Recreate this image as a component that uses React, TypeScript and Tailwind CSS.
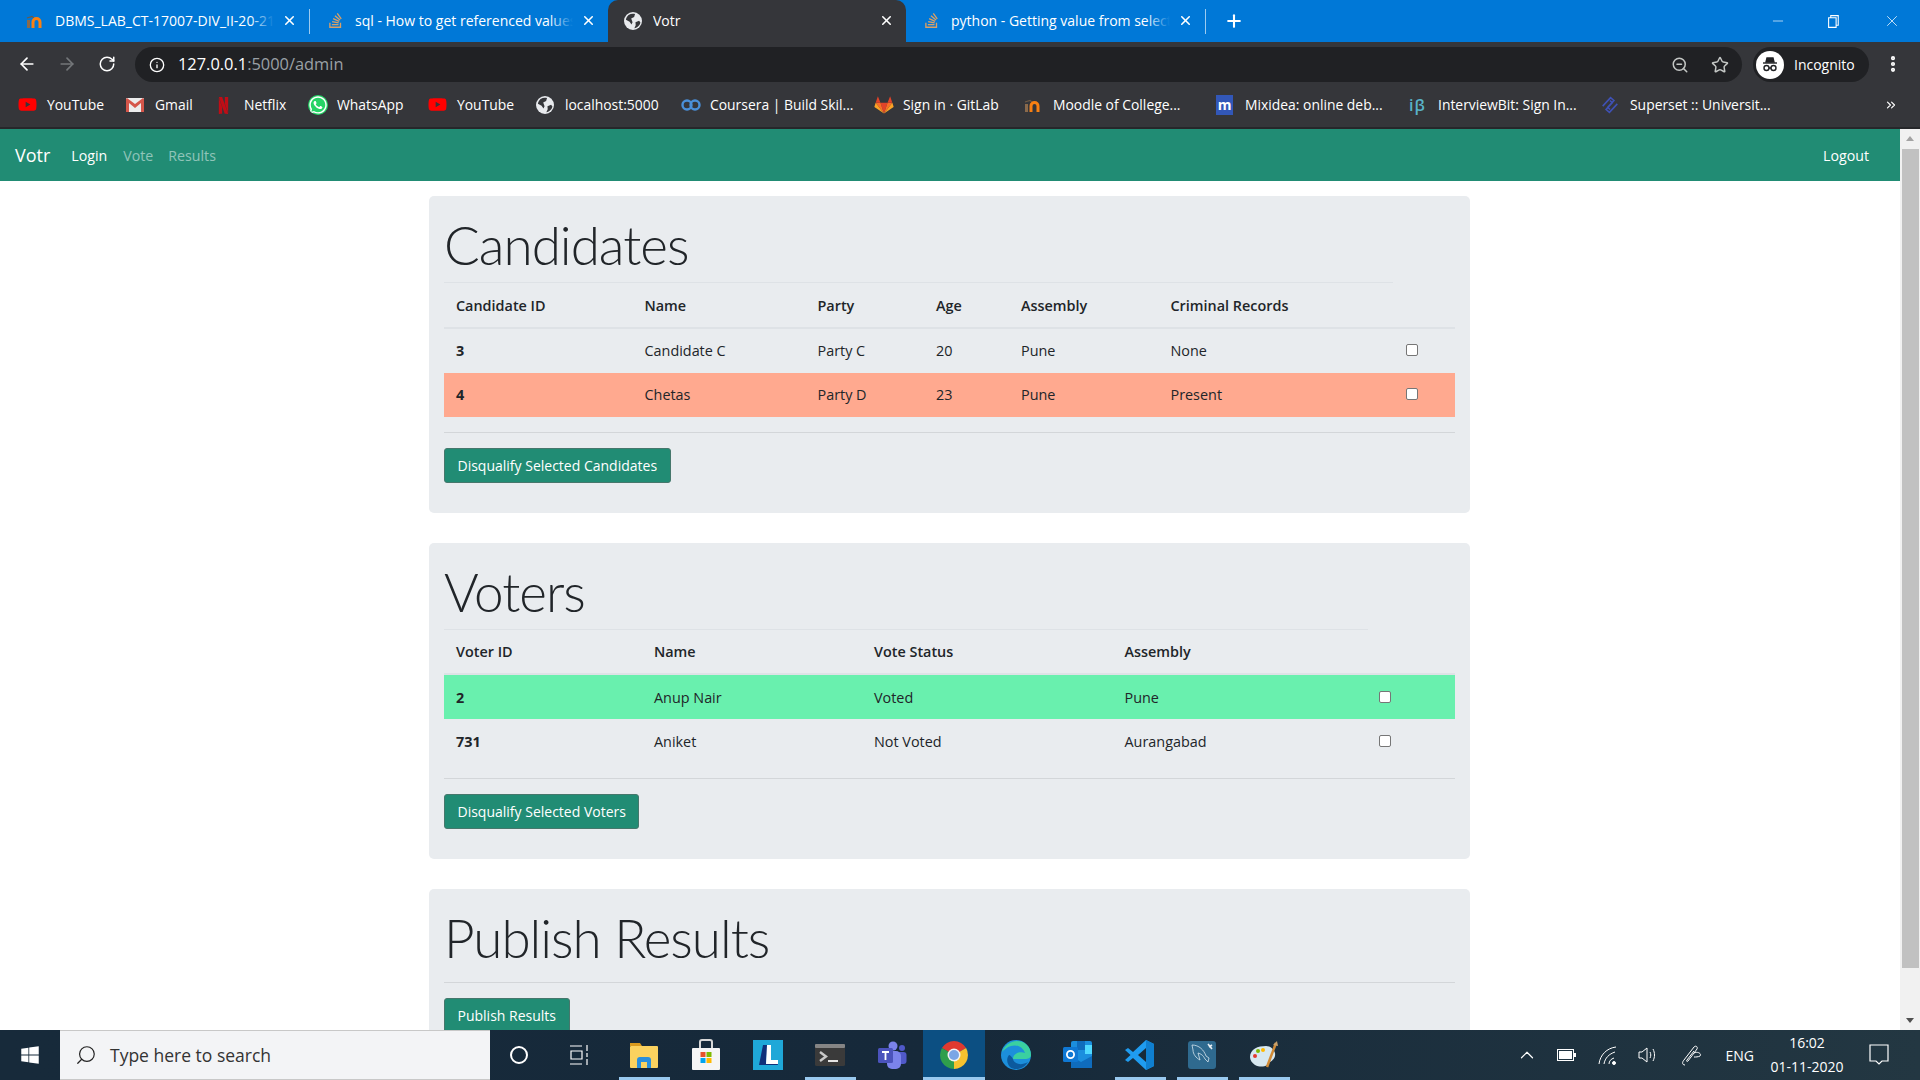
import { ChevronUp, Star, Search, ZoomOut, Plus, X, Minus, Info, ArrowLeft, ArrowRight, RotateCw, EllipsisVertical, ChevronsRight } from "lucide-react";
import { FaYoutube, FaWhatsapp, FaStackOverflow, FaWindows } from "react-icons/fa";
import { SiNetflix } from "react-icons/si";
import type { ReactNode } from "react";

const font = "font-['Open_Sans','Liberation_Sans',sans-serif]";

function MoodleIcon({ className = "" }: { className?: string }) {
  return (
    <svg viewBox="0 0 18 16" className={className} fill="none">
      <rect x="1" y="7" width="3" height="8" fill="#8a6a4c" />
      <path d="M1 5l5-1.5L8 5" stroke="#6f5a46" strokeWidth="1.2" />
      <path d="M7 15V9a3.5 3.5 0 017 0v6" stroke="#f98012" strokeWidth="3" />
    </svg>
  );
}

function GlobeIcon({ className = "" }: { className?: string }) {
  return (
    <svg viewBox="0 0 16 16" className={className}>
      <circle cx="8" cy="8" r="8" fill="#e8eaed" />
      <path d="M4 2.6C6 1.4 8 1.3 9.8 1.8L9 4.5 6.4 5.8 7.6 9 6.6 11 5 8.6 1.7 6.8C2 5 3 3.6 4 2.6z" fill="#35363a" />
      <path d="M10.2 9.2l3.2-1.4 1.2 1.6c-.4 2-1.8 3.8-3.8 4.6l-1.6.4 1.2-2.6z" fill="#35363a" />
    </svg>
  );
}

function Tab({ title, icon, active, width }: { title: string; icon: ReactNode; active?: boolean; width: string }) {
  return (
    <div className={`flex h-[42px] shrink-0 items-center pb-[1px] ${width} ${active ? "rounded-t-[10px] bg-[#35363a]" : ""}`}>
      <span className="flex w-[45px] shrink-0 justify-center pl-[5px]">{icon}</span>
      <span className="relative mr-[8px] min-w-0 flex-1 overflow-hidden text-[14px] whitespace-nowrap text-white">
        {title}
        {!active && <span className="absolute top-0 right-0 h-full w-6 bg-gradient-to-r from-transparent to-[#0078d7]" />}
      </span>
      <X className="mr-[12px] size-[15px] shrink-0 text-white" strokeWidth={2.5} />
    </div>
  );
}

function TabDivider() {
  return <span className="h-[25px] w-px shrink-0 bg-[#9ccbf0]" />;
}

const bookmarks = [
  { label: "YouTube", width: "w-[108px]", icon: <FaYoutube className="size-[19px] text-[#ff0000]" /> },
  { label: "Gmail", width: "w-[89px]", icon: (
    <svg viewBox="0 0 18 14" className="h-[14px] w-[18px]">
      <rect width="18" height="14" rx="1" fill="#ececec" />
      <path d="M0 1v13h3V5l6 5 6-5v9h3V1l-1-1-8 6-8-6z" fill="#d5564a" />
    </svg>
  ) },
  { label: "Netflix", width: "w-[93px]", icon: <SiNetflix className="h-[21px] w-[17px] text-[#c00d16]" /> },
  { label: "WhatsApp", width: "w-[120px]", icon: <FaWhatsapp className="size-[20px] rounded-full bg-[#25d366] text-white" /> },
  { label: "YouTube", width: "w-[108px]", icon: <FaYoutube className="size-[19px] text-[#ff0000]" /> },
  { label: "localhost:5000", width: "w-[145px]", icon: <GlobeIcon className="size-[18px]" /> },
  { label: "Coursera | Build Skil...", width: "w-[193px]", icon: (
    <svg viewBox="0 0 20 12" className="h-[12px] w-[20px]" fill="none" stroke="#4a90d9" strokeWidth="2.4">
      <circle cx="6" cy="6" r="4.5" />
      <circle cx="14" cy="6" r="4.5" />
    </svg>
  ) },
  { label: "Sign in · GitLab", width: "w-[150px]", icon: (
    <svg viewBox="0 0 18 17" className="h-[19px] w-[20px]">
      <path d="M9 16.5L12.2 7H5.8z" fill="#e24329" />
      <path d="M9 16.5L5.8 7H1.5z" fill="#fc6d26" />
      <path d="M9 16.5L12.2 7h4.3z" fill="#fc6d26" />
      <path d="M1.5 7L.4 10.2c-.1.3 0 .6.3.8L9 16.5z" fill="#fca326" />
      <path d="M16.5 7l1.1 3.2c.1.3 0 .6-.3.8L9 16.5z" fill="#fca326" />
      <path d="M1.5 7l2-6 2.3 6zM16.5 7l-2-6-2.3 6z" fill="#e24329" />
    </svg>
  ) },
  { label: "Moodle of College...", width: "w-[192px]", icon: <MoodleIcon className="h-[16px] w-[18px]" /> },
  { label: "Mixidea: online deb...", width: "w-[193px]", icon: (
    <span className="flex h-[20px] w-[17px] items-center justify-center bg-[#3257b8] text-[14px] leading-none font-bold text-white">m</span>
  ) },
  { label: "InterviewBit: Sign In...", width: "w-[192px]", icon: <span className="text-[16px] leading-none font-semibold tracking-[1px] text-[#59b3c9]">iβ</span> },
  { label: "Superset :: Universit...", width: "w-[260px]", icon: (
    <svg viewBox="0 0 16 16" className="size-[18px]" fill="none" stroke="#3f51b5" strokeWidth="1.4">
      <path d="M1.5 9L8.5 1.5l3 2.5-5.5 6 2 2M14.5 7l-7 7.5-3-2.5 5.5-6-2-2" />
    </svg>
  ) },
];

function ChromeBar() {
  return (
    <header className="shrink-0">
      <div className="flex h-[42px] items-center bg-[#0078d7]">
        <span className="w-[10px] shrink-0" />
        <Tab width="w-[299px]" title="DBMS_LAB_CT-17007-DIV_II-20-21" icon={<MoodleIcon className="h-[16px] w-[18px]" />} />
        <TabDivider />
        <Tab width="w-[298px]" title="sql - How to get referenced values" icon={<FaStackOverflow className="size-[17px] text-[#d9a066]" />} />
        <Tab width="w-[298px]" active title="Votr" icon={<GlobeIcon className="size-[18px]" />} />
        <Tab width="w-[299px]" title="python - Getting value from select" icon={<FaStackOverflow className="size-[17px] text-[#d9a066]" />} />
        <TabDivider />
        <Plus className="ml-[18px] size-[20px] text-white" strokeWidth={2.5} />
        <div className="ml-auto flex items-center">
          <Minus className="mr-[41px] size-[16px] text-white" strokeWidth={1} />
          <svg viewBox="0 0 14 14" className="mr-[41px] size-[15px]" fill="none" stroke="white">
            <path d="M3.5 3.5V1.5h7v9h-2M1.5 3.5h7v9h-7z" />
          </svg>
          <X className="mr-[19px] size-[18px] text-white" strokeWidth={1} />
        </div>
      </div>
      <div className="flex h-[40px] items-center bg-[#35363a] pt-[3px]">
        <ArrowLeft className="ml-[17px] size-[20px] text-white" />
        <ArrowRight className="ml-[20px] size-[20px] text-[#74777a]" />
        <RotateCw className="ml-[21px] size-[18px] text-white" />
        <div className="ml-[19px] flex h-[35px] w-[1607px] items-center self-end rounded-full bg-[#202124]">
          <Info className="ml-[14px] size-[16px] text-white" />
          <span className="ml-[13px] text-[16.4px] text-white">
            127.0.0.1<span className="text-[#9aa0a6]">:5000/admin</span>
          </span>
          <ZoomOut className="ml-auto size-[18px] text-[#c4c7c5]" />
          <Star className="mr-[13px] ml-[22px] size-[18px] text-[#c4c7c5]" />
        </div>
        <div className="ml-[11px] flex h-[35px] w-[116px] items-center self-end rounded-full bg-[#202124]">
          <span className="ml-[3px] flex size-[28px] items-center justify-center rounded-full bg-white">
            <svg viewBox="0 0 20 20" className="size-[20px]" fill="none" stroke="#202124" strokeWidth="1.4">
              <path d="M6 7l1-4h6l1 4z" fill="#202124" />
              <path d="M3 8h14" />
              <circle cx="6.5" cy="13" r="2.5" />
              <circle cx="13.5" cy="13" r="2.5" />
              <path d="M9 13h2" />
            </svg>
          </span>
          <span className="ml-[10px] text-[14px] text-white">Incognito</span>
        </div>
        <EllipsisVertical className="ml-[14px] size-[20px] text-white" strokeWidth={3} />
      </div>
      <div className="flex h-[47px] items-center border-b-2 border-[#26272a] bg-[#35363a] pt-[1px] pl-[18px] text-[13.9px] text-white">
        {bookmarks.map((b, i) => (
          <div key={i} className={`flex shrink-0 items-center ${b.width}`}>
            <span className="flex w-[29px] shrink-0 justify-start">{b.icon}</span>
            <span className="whitespace-nowrap">{b.label}</span>
          </div>
        ))}
        <ChevronsRight className="ml-[23px] size-[14px] text-white" />
      </div>
    </header>
  );
}

function Navbar() {
  return (
    <nav className="flex h-[52px] shrink-0 items-center bg-[#218c74] pt-[1px] pr-[31px] pl-[15px] text-[14.2px]">
      <span className="mr-[21px] text-[18px] text-white">Votr</span>
      <span className="mr-[16px] text-white">Login</span>
      <span className="mr-[15px] text-white/50">Vote</span>
      <span className="text-white/50">Results</span>
      <span className="ml-auto text-white">Logout</span>
    </nav>
  );
}

type Row = { cells: string[]; tone?: string };

function DataTable({ heads, cols, rows, boxMargin }: { heads: string[]; cols: string[]; rows: Row[]; boxMargin: string }) {
  return (
    <table className="w-full table-fixed border-collapse text-[14.4px] text-[#212529]">
      <colgroup>
        {cols.map((c) => (
          <col key={c} className={c} />
        ))}
        <col />
      </colgroup>
      <thead>
        <tr className="h-[45px] border-b-2 border-[#dee2e6] text-left">
          {heads.map((h) => (
            <th key={h} className="border-t border-[#dee2e6] px-3 pt-[2px] font-semibold">
              {h}
            </th>
          ))}
          <th />
        </tr>
      </thead>
      <tbody>
        {rows.map((r, idx) => (
          <tr key={r.cells[0]} className={`${idx === rows.length - 1 ? "h-[44px]" : "h-[45px]"} ${r.tone ?? ""}`}>
            {r.cells.map((c, i) => (
              <td key={c} className={`px-3 pt-[1px] ${i === 0 ? "font-bold" : ""}`}>
                {c}
              </td>
            ))}
            <td className="px-3 pb-[1px]">
              <span className={`block size-[12px] rounded-[2px] border border-[#767676] bg-white ${boxMargin}`} />
            </td>
          </tr>
        ))}
      </tbody>
    </table>
  );
}

function Card({ title, children }: { title: string; children: ReactNode }) {
  return (
    <section className="mb-[30px] rounded-[5px] bg-[#e9ecef] px-[15px] pb-[30px]">
      <h1 className="h-[86px] pt-[18px] font-['Lato','Open_Sans',sans-serif] text-[53px] leading-[62px] font-light tracking-[-1px] whitespace-nowrap text-[#212529]">{title}</h1>
      {children}
    </section>
  );
}

function GreenButton({ label }: { label: string }) {
  return (
    <button className="block h-[35px] rounded-[3px] border border-[#46776c] bg-[#218c74] px-[12.5px] text-[14px] text-white">{label}</button>
  );
}

function Page() {
  return (
    <div className="flex min-h-0 flex-1">
      <div className="flex min-w-0 flex-1 flex-col">
        <Navbar />
        <main className="min-h-0 flex-1 overflow-hidden bg-white pt-[15px] pr-[1px]">
          <div className="mx-auto w-[1041px]">
            <Card title="Candidates">
              <DataTable
                boxMargin="ml-[1px]"
                heads={["Candidate ID", "Name", "Party", "Age", "Assembly", "Criminal Records"]}
                cols={["w-[188.5px]", "w-[173px]", "w-[118.5px]", "w-[85px]", "w-[149.5px]", "w-[234.5px]"]}
                rows={[
                  { cells: ["3", "Candidate C", "Party C", "20", "Pune", "None"] },
                  { cells: ["4", "Chetas", "Party D", "23", "Pune", "Present"], tone: "bg-[#ffa98f]" },
                ]}
              />
              <hr className="mt-[15px] mb-[15px] border-[#d3d6d9]" />
              <GreenButton label="Disqualify Selected Candidates" />
            </Card>
            <Card title="Voters">
              <DataTable
                boxMargin="-ml-[1px]"
                heads={["Voter ID", "Name", "Vote Status", "Assembly"]}
                cols={["w-[198px]", "w-[220px]", "w-[250.5px]", "w-[255.5px]"]}
                rows={[
                  { cells: ["2", "Anup Nair", "Voted", "Pune"], tone: "bg-[#69f0ae]" },
                  { cells: ["731", "Aniket", "Not Voted", "Aurangabad"] },
                ]}
              />
              <hr className="mt-[15px] mb-[15px] border-[#d3d6d9]" />
              <GreenButton label="Disqualify Selected Voters" />
            </Card>
            <Card title="Publish Results">
              <hr className="mt-[7px] mb-[15px] border-[#d3d6d9]" />
              <GreenButton label="Publish Results" />
            </Card>
          </div>
        </main>
      </div>
      <div className="flex w-5 shrink-0 flex-col items-center bg-[#f1f1f1]">
        <span className="mt-[7px] size-0 border-x-[4px] border-b-[5px] border-x-transparent border-b-[#a3a3a3]" />
        <span className="mt-[8px] h-[819px] w-[17px] bg-[#c1c1c1]" />
        <span className="mt-auto mb-[7px] size-0 border-x-[4px] border-t-[5px] border-x-transparent border-t-[#505050]" />
      </div>
    </div>
  );
}

const apps = [
  { bar: "mx-[5.5px]", icon: (
    <svg viewBox="0 0 30 28" className="h-[28px] w-[30px]">
      <path d="M1 2h10l2 3h-12z" fill="#d99a1e" />
      <rect x="1" y="5" width="28" height="22" rx="1" fill="#fbd25f" />
      <path d="M8 27v-8a3 3 0 013-3h8a3 3 0 013 3v8h-4v-6h-6v6z" fill="#2a8fdc" />
    </svg>
  ) },
  { bar: "", icon: (
    <svg viewBox="0 0 30 32" className="h-[32px] w-[30px]">
      <path d="M9 9V3a2 2 0 012-2h8a2 2 0 012 2v6" fill="none" stroke="#d8d8d8" strokeWidth="2" />
      <rect x="1" y="9" width="28" height="22" rx="1" fill="#f5f5f5" />
      <rect x="9.5" y="13" width="5" height="5" fill="#e6522c" />
      <rect x="15.5" y="13" width="5" height="5" fill="#7fba00" />
      <rect x="9.5" y="19" width="5" height="5" fill="#00a4ef" />
      <rect x="15.5" y="19" width="5" height="5" fill="#ffb900" />
    </svg>
  ) },
  { bar: "", icon: (
    <svg viewBox="0 0 30 30" className="size-[30px]">
      <rect width="30" height="30" fill="#1fa8d8" />
      <path d="M10 5h5l-2 18h11v-1l1 3H6z" fill="#10307a" />
      <path d="M14 5h4v15h7v4H13z" fill="#fff" />
    </svg>
  ) },
  { bar: "mx-[5.5px]", icon: (
    <svg viewBox="0 0 30 22" className="h-[22px] w-[30px]">
      <rect width="30" height="22" rx="1.5" fill="#3a3a3a" />
      <rect width="30" height="4" rx="1" fill="#858585" />
      <path d="M5 8l6 4.5L5 17" fill="none" stroke="#c8c8c8" strokeWidth="2.4" />
      <path d="M13 17h10" stroke="#e4e4e4" strokeWidth="2" />
    </svg>
  ) },
  { bar: "", icon: (
    <svg viewBox="0 0 30 28" className="h-[28px] w-[30px]">
      <circle cx="16" cy="5" r="4.5" fill="#7b83eb" />
      <circle cx="25" cy="7" r="3" fill="#5059c9" />
      <rect x="20" y="11" width="9.5" height="12" rx="3" fill="#5059c9" />
      <rect x="10" y="10" width="14" height="18" rx="5" fill="#7b83eb" />
      <rect x="1" y="7" width="15" height="15" rx="1.5" fill="#4b53bc" />
      <path d="M5 11h7M8.5 11v8" stroke="#fff" strokeWidth="1.8" />
    </svg>
  ) },
  { bar: "", tone: "bg-[#0c4f82]", icon: (
    <svg viewBox="0 0 28 28" className="size-[28px]">
      <path d="M14 14L1.9 7A14 14 0 0126.1 7z" fill="#e0392f" />
      <path d="M14 14L26.1 7A14 14 0 0114 28z" fill="#f6c22f" />
      <path d="M14 14L14 28A14 14 0 011.9 7z" fill="#2f9e4c" />
      <circle cx="14" cy="14" r="6.5" fill="#f3f3f3" />
      <circle cx="14" cy="14" r="5" fill="#7aa5e6" />
    </svg>
  ) },
  { bar: "", icon: (
    <svg viewBox="0 0 30 30" className="size-[30px]">
      <circle cx="15" cy="15" r="15" fill="#1c8fdb" />
      <path d="M16 1c8 0 14 6 14 14 0 3-3 4-6 4H12c0-5 6-8 12-6-2-6-8-9-14-7C6 7 3 10 1 12 3 6 9 1 16 1z" fill="#3ad0a0" />
      <path d="M12 19c1 5 8 7 15 3-4 7-13 9-18 5-3-3-4-8-1-12 1 0 3 2 4 4z" fill="#0c5a9e" />
    </svg>
  ) },
  { bar: "", icon: (
    <svg viewBox="0 0 30 30" className="size-[30px]">
      <rect x="8" y="1" width="21" height="27" rx="2" fill="#1b8ede" />
      <rect x="14" y="1" width="8" height="9" fill="#0f6cbd" />
      <rect x="22" y="5" width="7" height="9" fill="#50d9ff" />
      <path d="M8 16l10 6 11-6v12H8z" fill="#0f6cbd" />
      <rect x="0" y="7" width="15" height="15" rx="1.5" fill="#0f78d4" />
      <circle cx="7.5" cy="14.5" r="3.6" fill="none" stroke="#fff" strokeWidth="1.8" />
    </svg>
  ) },
  { bar: "mx-[5.5px]", icon: (
    <svg viewBox="0 0 30 30" className="size-[30px]">
      <path d="M21 0l8 4v22l-8 4L8 18l-5 4-3-2 5.5-5L0 10l3-2 5 4z" fill="#1f9cf0" />
      <path d="M21 0l8 4v22l-8 4z" fill="#0f7fd0" />
      <path d="M21 8l-8 7 8 7z" fill="#172a3a" />
    </svg>
  ) },
  { bar: "mx-[5.5px]", icon: (
    <svg viewBox="0 0 28 28" className="size-[28px]">
      <rect width="28" height="28" rx="3" fill="#2f6a8f" />
      <path d="M4 4c7 0 12 5 14 11l3 2-1 4-3-3c-2-4-4-5-7-6l2 7c-4-2-7-6-7-10z" fill="none" stroke="#d5e4ee" strokeWidth="0.8" />
      <path d="M20 3l4 5M24 4l-3 2" stroke="#e8eef2" strokeWidth="1.6" />
    </svg>
  ) },
  { bar: "mx-[5.5px]", icon: (
    <svg viewBox="0 0 30 28" className="h-[28px] w-[30px]">
      <path d="M1 16C1 8 9 5 17 5c4 0 8 3 9 7 1 6-4 8-8 12-3 2-8 2-12 0-3-2-5-5-5-8z" fill="#d7e8f0" />
      <circle cx="6" cy="15" r="2" fill="#e5392f" />
      <circle cx="9" cy="10" r="2" fill="#7fba00" />
      <circle cx="14" cy="9" r="2" fill="#ffb900" />
      <path d="M27 2l-9 24" stroke="#d08a36" strokeWidth="2.5" />
      <path d="M24 4l4-4 1 5z" fill="#c9a06a" />
    </svg>
  ) },
];

function Taskbar() {
  return (
    <footer className="flex h-[50px] shrink-0 items-center bg-gradient-to-r from-[#172a3a] via-[#16293a] to-[#233742] text-white">
      <FaWindows className="ml-[20px] size-[20px] text-white" />
      <div className="ml-[20px] flex h-full w-[430px] items-center border-y border-[#c8c8c8] bg-[#f3f4f6]">
        <Search className="ml-[15px] size-[22px] -scale-x-100 text-[#222]" strokeWidth={1.3} />
        <span className="ml-[13px] text-[17.5px] text-[#333]">Type here to search</span>
      </div>
      <span className="ml-[20px] size-[18px] rounded-full border-[2.5px] border-white" />
      <svg viewBox="0 0 20 20" className="ml-[42px] size-[20px]" fill="none" stroke="white" strokeWidth="1.2">
        <path d="M0 1h12M0 19h12M1 6h11v8H1zM17 0v6M17 8v4M17 14v6" />
      </svg>
      <div className="ml-[23px] flex h-full">
        {apps.map((a, i) => (
          <div key={i} className={`relative flex h-full w-[62px] items-center justify-center ${a.tone ?? ""}`}>
            {a.icon}
            {(a.bar || a.tone) && <span className={`absolute inset-x-0 bottom-0 h-[3px] bg-[#99c9ef] ${a.bar}`} />}
          </div>
        ))}
      </div>
      <div className="ml-auto flex items-center">
        <ChevronUp className="size-[22px] text-white" strokeWidth={1.3} />
        <svg viewBox="0 0 20 12" className="ml-[19px] h-[12px] w-[20px]" fill="none" stroke="white">
          <rect x="0.5" y="0.5" width="16" height="11" />
          <rect x="2" y="2" width="13" height="8" fill="white" stroke="none" />
          <path d="M18 4v4" strokeWidth="2" />
        </svg>
        <svg viewBox="0 0 20 20" className="ml-[21px] size-[20px]" fill="none" stroke="white">
          <path d="M1 19C2 10 9 3 18 2M6 19c1-6 5-10 11-12M11 19c0-3 2-5 5-6" />
          <circle cx="16" cy="18" r="1.5" fill="white" />
        </svg>
        <svg viewBox="0 0 20 20" className="ml-[19px] size-[20px]" fill="none" stroke="white">
          <path d="M2 7h3l5-4v14l-5-4H2zM13 7c1 2 1 4 0 6M16 4c2 4 2 8 0 12" />
        </svg>
        <svg viewBox="0 0 22 22" className="ml-[24px] size-[22px]" fill="none" stroke="white">
          <path d="M4 21c-3 0-3-3-1-5L13 3c2-2 4 0 3 2L7 17c-1 1-2 0-1-1l7-9M13 9c4-2 8 1 6 3-2 1-4 1-6 1" />
        </svg>
        <span className="ml-[23px] text-[14px]">ENG</span>
        <div className="ml-[13px] flex w-[80px] flex-col items-center text-[14px] leading-[24px]">
          <span>16:02</span>
          <span>01-11-2020</span>
        </div>
        <svg viewBox="0 0 20 22" className="mr-[31px] ml-[22px] h-[22px] w-[20px]" fill="none" stroke="white" strokeWidth="1.2">
          <path d="M1 1h18v16h-6l-3 3-3-3H1z" />
        </svg>
      </div>
    </footer>
  );
}

export default function App() {
  return (
    <div className={`flex h-screen w-full flex-col overflow-hidden ${font}`}>
      <ChromeBar />
      <Page />
      <Taskbar />
    </div>
  );
}
